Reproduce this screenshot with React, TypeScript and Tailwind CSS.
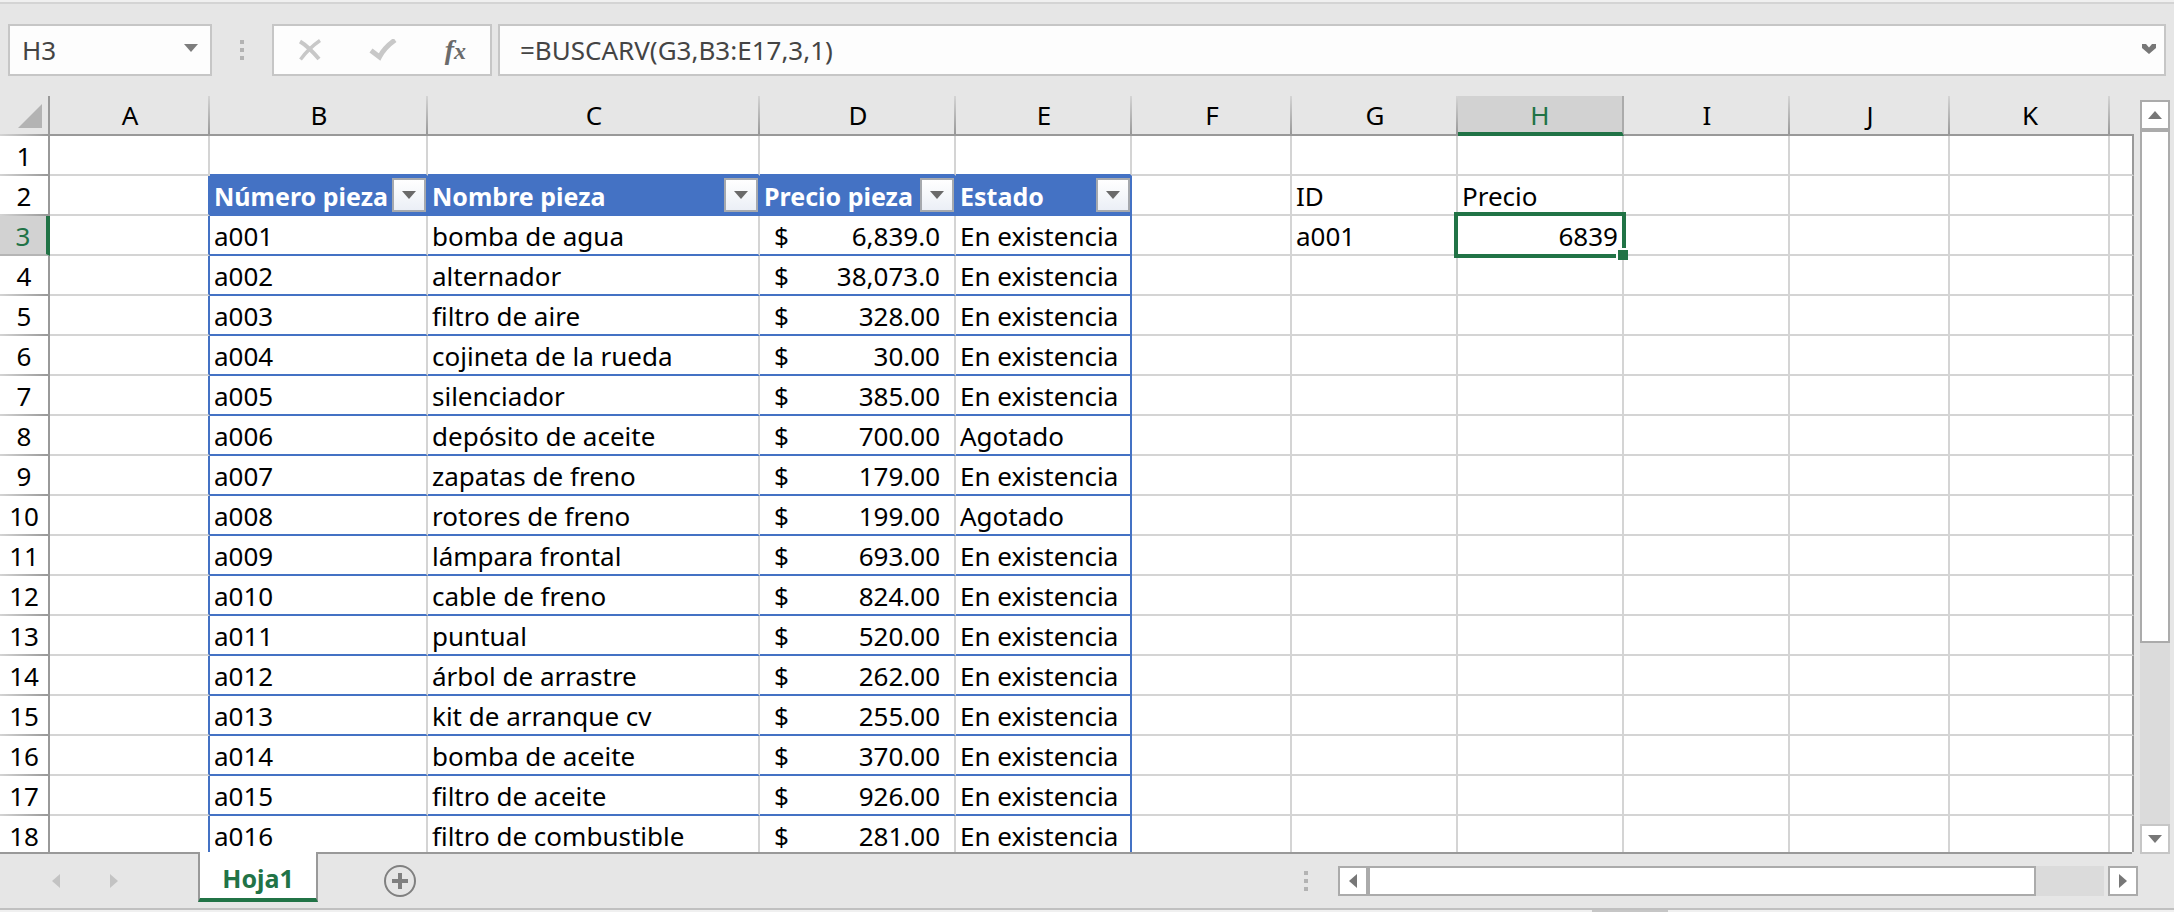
import React from "react";

type Part = { id: string; name: string; price: string; status: string };

const parts: Part[] = [
  { id: "a001", name: "bomba de agua", price: "6,839.0", status: "En existencia" },
  { id: "a002", name: "alternador", price: "38,073.0", status: "En existencia" },
  { id: "a003", name: "filtro de aire", price: "328.00", status: "En existencia" },
  { id: "a004", name: "cojineta de la rueda", price: "30.00", status: "En existencia" },
  { id: "a005", name: "silenciador", price: "385.00", status: "En existencia" },
  { id: "a006", name: "depósito de aceite", price: "700.00", status: "Agotado" },
  { id: "a007", name: "zapatas de freno", price: "179.00", status: "En existencia" },
  { id: "a008", name: "rotores de freno", price: "199.00", status: "Agotado" },
  { id: "a009", name: "lámpara frontal", price: "693.00", status: "En existencia" },
  { id: "a010", name: "cable de freno", price: "824.00", status: "En existencia" },
  { id: "a011", name: "puntual", price: "520.00", status: "En existencia" },
  { id: "a012", name: "árbol de arrastre", price: "262.00", status: "En existencia" },
  { id: "a013", name: "kit de arranque cv", price: "255.00", status: "En existencia" },
  { id: "a014", name: "bomba de aceite", price: "370.00", status: "En existencia" },
  { id: "a015", name: "filtro de aceite", price: "926.00", status: "En existencia" },
  { id: "a016", name: "filtro de combustible", price: "281.00", status: "En existencia" },
];

const letters = ["A", "B", "C", "D", "E", "F", "G", "H", "I", "J", "K"];
const rows = Array.from({ length: 18 }, (_, i) => i + 1);

const tableHeads: Record<string, string> = {
  B: "Número pieza",
  C: "Nombre pieza",
  D: "Precio pieza",
  E: "Estado",
};

function Triangle({ dir, className }: { dir: "up" | "down" | "left" | "right"; className: string }) {
  const points = {
    up: "0,8 14,8 7,0",
    down: "0,0 14,0 7,8",
    left: "8,0 8,14 0,7",
    right: "0,0 0,14 8,7",
  }[dir];
  const vertical = dir === "up" || dir === "down";
  return (
    <svg
      width={vertical ? 14 : 8}
      height={vertical ? 8 : 14}
      viewBox={vertical ? "0 0 14 8" : "0 0 8 14"}
      className={className}
      aria-hidden="true"
    >
      <polygon points={points} fill="currentColor" />
    </svg>
  );
}

function Grip() {
  return (
    <div className="flex w-1 shrink-0 flex-col gap-1">
      <span className="h-1 w-1 bg-[#b3b3b3]" />
      <span className="h-1 w-1 bg-[#b3b3b3]" />
      <span className="h-1 w-1 bg-[#b3b3b3]" />
    </div>
  );
}

function FormulaBar() {
  return (
    <div className="flex h-[92px] shrink-0 items-start pt-5 pr-2 pl-2">
      <div className="flex h-[52px] w-[204px] shrink-0 items-center border-2 border-[#c6c6c6] bg-[#fdfdfd] pr-3">
        <input
          aria-label="Cuadro de nombres"
          defaultValue="H3"
          className="h-full w-full min-w-0 flex-1 bg-transparent pl-3 text-[26px] text-[#444] outline-none"
        />
        <button aria-label="Abrir cuadro de nombres">
          <Triangle dir="down" className="mb-1 block text-[#7d7d7d]" />
        </button>
      </div>
      <div className="flex h-[52px] w-[60px] shrink-0 items-center justify-center">
        <Grip />
      </div>
      <div className="flex h-[52px] w-[220px] shrink-0 items-center justify-between border-2 border-[#c6c6c6] bg-[#fdfdfd] px-6">
        <button aria-label="Cancelar">
          <svg width="24" height="22" viewBox="0 0 24 22" className="block" fill="none" stroke="#c8c8c8" aria-hidden="true">
            <path d="M2 2.5 C8 6 15 13 21 20" strokeWidth="4" />
            <path d="M22 1.5 C14 7 8 13 2.5 20.5" strokeWidth="3.4" />
          </svg>
        </button>
        <button aria-label="Introducir">
          <svg width="28" height="22" viewBox="0 0 28 22" className="block" fill="none" stroke="#c8c8c8" aria-hidden="true">
            <path d="M2 11.5 L10.5 18 C13 13 19 6 26 1" strokeWidth="5" />
          </svg>
        </button>
        <button
          aria-label="Insertar función"
          className="flex items-baseline font-['Liberation_Serif',serif] text-[28px] leading-8 font-bold text-[#6b6b6b] italic"
        >
          f<span className="text-2xl leading-8">x</span>
        </button>
      </div>
      <div className="ml-1.5 flex h-[52px] min-w-0 flex-1 items-center border-2 border-[#c6c6c6] bg-[#fdfdfd] pr-2">
        <input
          aria-label="Barra de fórmulas"
          defaultValue="=BUSCARV(G3,B3:E17,3,1)"
          className="h-full min-w-0 flex-1 bg-transparent pl-5 text-[26px] text-[#444] outline-none"
        />
        <button aria-label="Expandir barra de fórmulas">
          <svg width="14" height="10" viewBox="0 0 14 10" className="mb-0.5 block" aria-hidden="true">
            <path d="M0 0 H4 L7 3.5 L10 0 H14 V4 L7 10 L0 4 Z" fill="#777" />
          </svg>
        </button>
      </div>
    </div>
  );
}

function ColumnHead({ letter }: { letter: string }) {
  const active = letter === "H";
  return (
    <th
      scope="col"
      className={
        active
          ? "border-r-2 border-b-4 border-r-[#ababab] border-b-[#217346] bg-[#d2d2d2] p-0 font-normal text-[#217346]"
          : "border-b-2 border-[#999] bg-[linear-gradient(#d4d4d4,#999)] bg-[length:2px_100%] bg-right bg-no-repeat p-0 font-normal"
      }
    >
      <div className={active ? "pt-0.5" : ""}>{letter}</div>
    </th>
  );
}

function RowHead({ row }: { row: number }) {
  const active = row === 3;
  return (
    <th
      scope="row"
      className={
        active
          ? "border-r-4 border-b-2 border-r-[#217346] border-b-[#b5b5b5] bg-[#d2d2d2] px-0 pt-0.5 pb-0 font-normal text-[#217346]"
          : "border-r-2 border-[#999] bg-[linear-gradient(to_right,#d4d4d4,#999)] bg-[length:100%_2px] bg-bottom bg-no-repeat p-0 font-normal"
      }
    >
      {row}
    </th>
  );
}

function Cell({ letter, row }: { letter: string; row: number }) {
  const inTable = letter >= "B" && letter <= "E";
  const part = parts[row - 3];

  if (inTable && row === 2) {
    return (
      <td className="border-r-2 border-b-2 border-[#4472c4] bg-[#4472c4] p-0 text-[25px] font-bold text-white">
        <div className="flex items-center justify-between pl-1">
          <span className="pt-0.5">{tableHeads[letter]}</span>
          <button
            aria-label={`Filtrar ${tableHeads[letter]}`}
            className="flex h-[34px] w-[34px] shrink-0 items-center justify-center border-2 border-[#a6a9ae] bg-linear-to-b from-white to-[#ebeff6]"
          >
            <Triangle dir="down" className="block text-[#6a6a6a]" />
          </button>
        </div>
      </td>
    );
  }

  if (inTable && part) {
    const edge =
      letter === "E"
        ? "border-r-2 border-b-2 border-[#4472c4] px-1 pt-0.5 pb-0"
        : "border-r-2 border-b-2 border-r-[#d4d4d4] border-b-[#4472c4] px-1 pt-0.5 pb-0";
    if (letter === "D") {
      return (
        <td className={edge}>
          <div className="flex justify-between px-2.5">
            <span>$</span>
            <span>{part.price}</span>
          </div>
        </td>
      );
    }
    return <td className={edge}>{letter === "B" ? part.id : letter === "C" ? part.name : part.status}</td>;
  }

  if (inTable) {
    return <td className="border-r-2 border-b-2 border-r-[#d4d4d4] border-b-[#4472c4] p-0" />;
  }
  if (letter === "A" && row > 1) {
    return <td className="border-r-2 border-b-2 border-r-[#4472c4] border-b-[#d4d4d4] p-0" />;
  }
  if (letter === "H" && row === 3) {
    return (
      <td className="relative border-r-2 border-b-2 border-[#d4d4d4] px-1 pt-0.5 pb-0 text-right">
        6839
        <span className="absolute -inset-1 border-4 border-[#217346]" />
        <span className="absolute -right-1.5 -bottom-1.5 h-3 w-3 border-t-2 border-l-2 border-white bg-[#217346]" />
      </td>
    );
  }
  let text = "";
  if (letter === "G" && row === 2) text = "ID";
  if (letter === "G" && row === 3) text = "a001";
  if (letter === "H" && row === 2) text = "Precio";
  return <td className="border-r-2 border-b-2 border-[#d4d4d4] px-1 pt-0.5 pb-0">{text}</td>;
}

function Sheet() {
  return (
    <div className="min-w-0 flex-1 overflow-hidden">
      <table className="w-full table-fixed border-separate border-spacing-0 text-[26px] leading-8 whitespace-nowrap text-black">
        <colgroup>
          <col className="w-[50px]" />
          <col className="w-[160px]" />
          <col className="w-[218px]" />
          <col className="w-[332px]" />
          <col className="w-[196px]" />
          <col className="w-[176px]" />
          <col className="w-[160px]" />
          <col className="w-[166px]" />
          <col className="w-[166px]" />
          <col className="w-[166px]" />
          <col className="w-[160px]" />
          <col className="w-[160px]" />
          <col />
        </colgroup>
        <thead>
          <tr className="h-10">
            <td className="border-r-2 border-[#999] bg-[linear-gradient(to_right,#d4d4d4,#999)] bg-[length:100%_2px] bg-bottom bg-no-repeat p-0">
              <button aria-label="Seleccionar todo" className="ml-auto block pr-1.5">
                <svg width="24" height="24" viewBox="0 0 24 24" className="block" aria-hidden="true">
                  <polygon points="24,0 24,24 0,24" fill="#b3b3b3" />
                </svg>
              </button>
            </td>
            {letters.map((l) => (
              <ColumnHead key={l} letter={l} />
            ))}
            <td className="border-b-2 border-[#999] p-0" />
          </tr>
        </thead>
        <tbody className="bg-white">
          {rows.map((r) => (
            <tr key={r} className="h-10">
              <RowHead row={r} />
              {letters.map((l) => (
                <Cell key={l} letter={l} row={r} />
              ))}
              <td className="border-r-2 border-b-2 border-r-[#999] border-b-[#d4d4d4] p-0" />
            </tr>
          ))}
        </tbody>
      </table>
    </div>
  );
}

function VerticalScroll() {
  return (
    <div className="mr-1 ml-1.5 flex w-[30px] shrink-0 flex-col pt-1">
      <button
        aria-label="Desplazar arriba"
        className="flex h-[30px] shrink-0 items-center justify-center border-2 border-[#ababab] bg-white"
      >
        <Triangle dir="up" className="block text-[#777]" />
      </button>
      <div className="flex flex-1 flex-col bg-[#dbdbdb]">
        <div className="flex-[512] border-2 border-[#ababab] bg-white" />
        <div className="flex-[182]" />
      </div>
      <button
        aria-label="Desplazar abajo"
        className="-mb-0.5 flex h-[30px] shrink-0 items-center justify-center border-2 border-[#c6c6c6] bg-white"
      >
        <Triangle dir="down" className="block text-[#777]" />
      </button>
    </div>
  );
}

function BottomBar() {
  return (
    <div className="flex h-14 shrink-0">
      <div className="flex w-3/5 border-t-2 border-[#999]">
        <div className="flex w-[198px] shrink-0 items-center gap-[50px] pl-[52px]">
          <button aria-label="Hoja anterior">
            <Triangle dir="left" className="block text-[#c3c3c3]" />
          </button>
          <button aria-label="Hoja siguiente">
            <Triangle dir="right" className="block text-[#c3c3c3]" />
          </button>
        </div>
        <button className="-mt-0.5 h-[50px] w-[120px] shrink-0 border-x-2 border-b-4 border-x-[#999] border-b-[#217346] bg-white pt-1.5 text-[25px] leading-8 font-bold text-[#217346]">
          Hoja1
        </button>
        <button aria-label="Hoja nueva" className="ml-[66px]">
          <svg width="32" height="32" viewBox="0 0 32 32" className="block" fill="none" stroke="#808080" aria-hidden="true">
            <circle cx="16" cy="16" r="15" strokeWidth="2" />
            <path d="M16 8 V24 M8 16 H24" strokeWidth="4" />
          </svg>
        </button>
      </div>
      <div className="flex min-w-0 flex-1">
        <div className="flex min-w-0 flex-1 items-center border-t-2 border-[#999]">
          <Grip />
          <button
            aria-label="Desplazar a la izquierda"
            className="ml-[30px] flex h-[30px] w-[30px] shrink-0 items-center justify-center border-2 border-[#ababab] bg-white"
          >
            <Triangle dir="left" className="block text-[#777]" />
          </button>
          <div className="h-[30px] min-w-0 flex-1 border-2 border-[#ababab] bg-white" />
          <div className="h-[30px] w-[68px] shrink-0 bg-[#dbdbdb]" />
          <div className="w-[28px] shrink-0" />
        </div>
        <div className="-ml-6 flex w-[66px] shrink-0 items-center pt-0.5">
          <button
            aria-label="Desplazar a la derecha"
            className="flex h-[30px] w-[30px] items-center justify-center border-2 border-[#ababab] bg-white"
          >
            <Triangle dir="right" className="block text-[#777]" />
          </button>
        </div>
      </div>
    </div>
  );
}

export default function App() {
  return (
    <div className="flex h-screen flex-col overflow-hidden bg-[#e6e6e6] font-['Noto_Sans',sans-serif]">
      <div className="h-1 shrink-0 border-b-2 border-[#d4d4d4] bg-[#f0f0f0]" />
      <FormulaBar />
      <div className="flex min-h-0 flex-1">
        <Sheet />
        <VerticalScroll />
      </div>
      <BottomBar />
      <div className="flex h-1 shrink-0 border-t-2 border-[#c0c0c0] bg-[#f0f0f0]">
        <div className="ml-auto w-[76px] bg-[#c6c6c6]" />
        <div className="w-[506px]" />
      </div>
    </div>
  );
}
